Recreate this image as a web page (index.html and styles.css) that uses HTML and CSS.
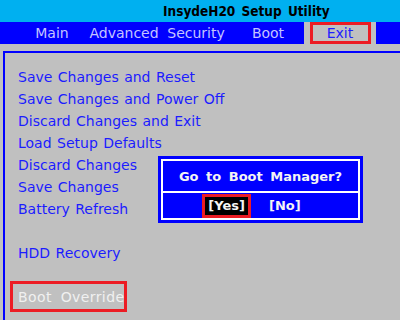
FILE: index.html
```html
<!DOCTYPE html>
<html>
<head>
<meta charset="utf-8">
<link rel="stylesheet" href="styles.css">
</head>
<body>
<div class="screen">
  <div class="titlebar"><span class="title">InsydeH20 Setup Utility</span></div>
  <div class="tabbar">
    <div class="tab">Main</div>
    <div class="tab">Advanced</div>
    <div class="tab">Security</div>
    <div class="tab">Boot</div>
    <div class="tab active"><span class="tab-box">Exit</span></div>
  </div>
  <div class="content">
    <div class="frame">
      <ul class="menu">
        <li>Save Changes and Reset</li>
        <li>Save Changes and Power Off</li>
        <li>Discard Changes and Exit</li>
        <li>Load Setup Defaults</li>
        <li>Discard Changes</li>
        <li>Save Changes</li>
        <li>Battery Refresh</li>
        <li class="blank"></li>
        <li>HDD Recovery</li>
        <li class="blank"></li>
        <li class="selected"><span class="sel-box">Boot Override</span></li>
      </ul>
    </div>
    <div class="dialog">
      <div class="dialog-inner">
        <div class="dialog-title">Go to Boot Manager?</div>
        <div class="dialog-buttons">
          <span class="btn btn-active">[Yes]</span>
          <span class="btn">[No]</span>
        </div>
      </div>
    </div>
  </div>
</div>
</body>
</html>
```
FILE: styles.css
```css
html, body {
  margin: 0;
  padding: 0;
  background: #c0c0c0;
}
.screen {
  width: 400px;
  height: 320px;
  overflow: hidden;
  font-family: "DejaVu Sans", Verdana, sans-serif;
  font-size: 14px;
  word-spacing: 1px;
}
.titlebar {
  height: 22px;
  background: #00b0f0;
  display: flex;
  align-items: center;
  padding-left: 163px;
}
.title {
  color: #000;
  font-family: "DejaVu Sans Condensed", "DejaVu Sans", sans-serif;
  font-weight: bold;
  font-size: 13.5px;
  word-spacing: 2px;
}
.tabbar {
  height: 22px;
  background: #0000ff;
  display: flex;
  padding-left: 16px;
}
.tab {
  width: 72px;
  display: flex;
  align-items: center;
  justify-content: center;
  color: #c4c4ff;
  font-size: 14px;
  word-spacing: 0;
}
.tab.active {
  background: #c0c0c0;
  color: #2020ff;
}
.tab-box {
  box-sizing: border-box;
  width: 61px;
  height: 22px;
  border: 3px solid #ec1c24;
  display: flex;
  align-items: center;
  justify-content: center;
}
.content {
  position: relative;
  height: 276px;
}
.frame {
  position: absolute;
  left: 3px;
  top: 7px;
  right: -10px;
  bottom: -10px;
  border-top: 2px solid #0000ff;
  border-left: 2px solid #0000ff;
}
.menu {
  list-style: none;
  margin: 0;
  padding: 13px 0 0 13px;
}
.menu li {
  height: 22px;
  line-height: 22px;
  color: #1c1cff;
}
.menu li.selected {
  color: #f0f0f0;
  letter-spacing: 0.4px;
  word-spacing: 4px;
}
.sel-box {
  position: relative;
  display: inline-block;
}
.sel-box::before {
  content: "";
  position: absolute;
  left: -8px;
  right: -3px;
  top: -5px;
  bottom: -4px;
  border: 3px solid #ec1c24;
}
.dialog {
  position: absolute;
  left: 158px;
  top: 112px;
  width: 205px;
  height: 67px;
  box-sizing: border-box;
  background: #0000ff;
  padding: 3px;
}
.dialog-inner {
  box-sizing: border-box;
  height: 100%;
  border: 2px solid #ffffff;
  display: flex;
  flex-direction: column;
}
.dialog-title {
  height: 30px;
  display: flex;
  align-items: center;
  justify-content: center;
  color: #f4f4f4;
  font-weight: bold;
  font-size: 13px;
  word-spacing: 3px;
  border-bottom: 2px solid #ffffff;
}
.dialog-buttons {
  flex: 1;
  display: flex;
  align-items: center;
  justify-content: center;
  gap: 18px;
  padding-right: 18px;
  color: #f4f4f4;
  font-weight: bold;
  font-size: 13px;
}
.btn-active {
  background: #000;
  border: 3px solid #ec1c24;
  padding: 0 3px;
  line-height: 18px;
}
```
